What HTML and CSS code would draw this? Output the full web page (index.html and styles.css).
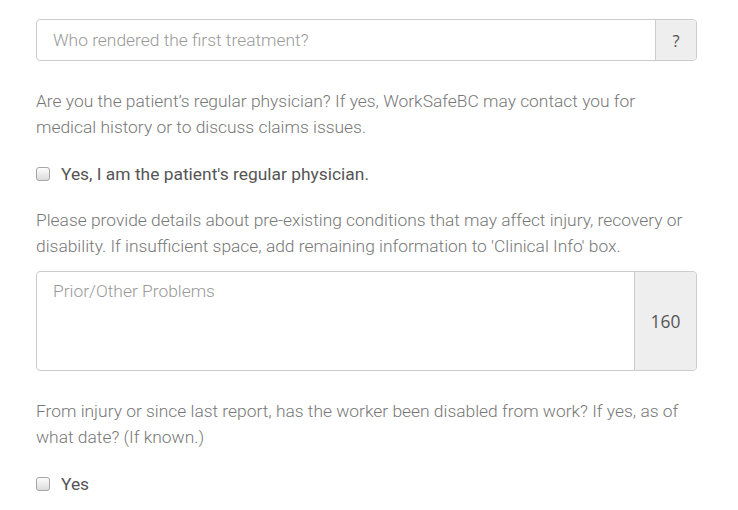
FILE: index.html
```html
<!DOCTYPE html>
<html>
<head>
<meta charset="utf-8">
<link rel="stylesheet" href="styles.css">
</head>
<body>
<div class="form">
  <div class="group group-input">
    <div class="field">Who rendered the first treatment?</div>
    <div class="addon addon-q">?</div>
  </div>

  <p class="text text-1">Are you the patient’s regular physician? If yes, WorkSafeBC may contact you for medical history or to discuss claims issues.</p>

  <label class="check check-1"><input type="checkbox" class="box"><span>Yes, I am the patient's regular physician.</span></label>

  <p class="text text-2">Please provide details about pre-existing conditions that may affect injury, recovery or disability. If insufficient space, add remaining information to 'Clinical Info' box.</p>

  <div class="group group-area">
    <div class="field field-area">Prior/Other Problems</div>
    <div class="addon addon-count">160</div>
  </div>

  <p class="text text-3">From injury or since last report, has the worker been disabled from work? If yes, as of what date? (If known.)</p>

  <label class="check check-2"><input type="checkbox" class="box"><span>Yes</span></label>
</div>
</body>
</html>
```

FILE: styles.css
```css
html, body {
  margin: 0;
  padding: 0;
  background: #fff;
}
body {
  font-family: Roboto, "Liberation Sans", sans-serif;
}
.form {
  width: 661px;
  margin-left: 36px;
  padding-top: 19px;
}
.group {
  display: flex;
  border: 1px solid #ccc;
  border-radius: 4px;
  box-sizing: border-box;
  overflow: hidden;
}
.group-input {
  height: 42px;
}
.group-area {
  height: 100px;
  margin-top: 12px;
}
.field {
  flex: 1;
  padding: 0 16px;
  font-size: 17.4px;
  font-weight: 300;
  color: #999;
  display: flex;
  align-items: center;
}
.field-area {
  align-items: flex-start;
  padding-top: 9px;
}
.addon {
  background: #eee;
  border-left: 1px solid #ccc;
  display: flex;
  align-items: center;
  justify-content: center;
  font-family: "Open Sans", "Noto Sans", sans-serif;
  color: #555;
  font-size: 17.4px;
}
.addon-q {
  width: 40px;
  font-size: 16.5px;
}
.addon-count {
  width: 61px;
}
.text {
  margin: 0;
  font-size: 17.4px;
  font-weight: 300;
  line-height: 26px;
  color: #777;
}
.text-1 { margin-top: 27px; }
.text-2 { margin-top: 21px; }
.text-3 { margin-top: 27px; }
.check {
  display: flex;
  align-items: center;
  height: 24px;
  font-size: 17.4px;
  color: #555;
}
.check-1 { margin-top: 22px; }
.check-2 { margin-top: 22px; }
.box {
  appearance: none;
  -webkit-appearance: none;
  width: 14px;
  height: 14px;
  margin: 0 11px 0 0;
  border: 1px solid #a6a6a6;
  border-radius: 3px;
  background: linear-gradient(#fcfcfc, #dcdcdc);
  box-sizing: border-box;
}
```
